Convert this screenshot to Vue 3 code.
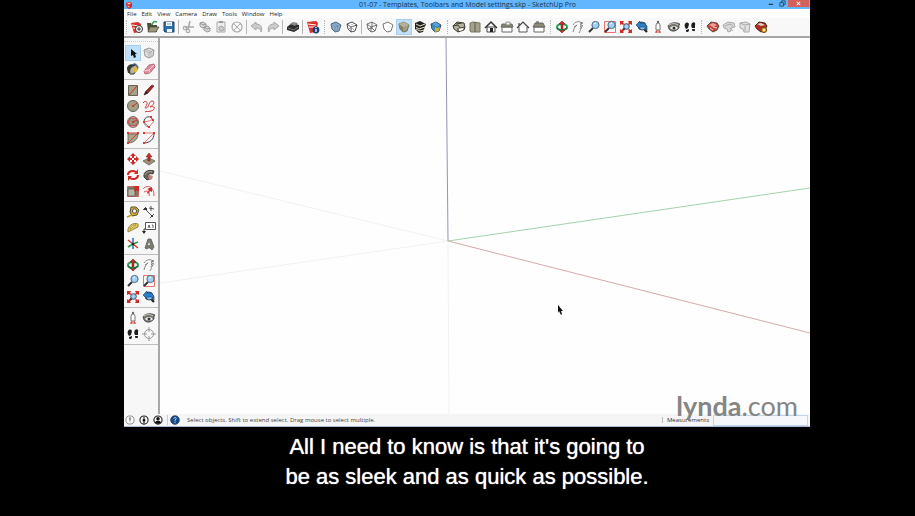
<template>
  <div class="player">
    <svg class="sprite" aria-hidden="true">
      <symbol id="i-logo" viewBox="0 0 16 16">
        <path d="M2 4l7-3 5 3v8l-6 4-5-4z" fill="#d42a23" />
        <path d="M4 5l5-2 3 2-4 2zM5 9l4 2v2l-4-2z" fill="#ffd9d2" />
      </symbol>
      <symbol id="i-new" viewBox="0 0 16 16">
        <path d="M2 4l7-1 3 2-1 8-6 1z" fill="#d9302a" />
        <path d="M3 6l7 1M4 9l6 1" stroke="#fff" />
        <circle cx="10" cy="10" r="3.5" fill="#fff" stroke="#333" />
        <path d="M10 8v4M8 10h4" stroke="#333" />
      </symbol>
      <symbol id="i-open" viewBox="0 0 16 16">
        <path d="M2 4h4l1 2h5v7H3z" fill="#4c4b3c" />
        <path d="M5 8h9l-3 5H3z" fill="#9a9879" stroke="#4c4b3c" stroke-width=".7" />
        <path d="M7 6c1-4 3-4 5-3" fill="none" stroke="#38a54a" stroke-width="1.5" />
      </symbol>
      <symbol id="i-save" viewBox="0 0 16 16">
        <path d="M3 3h10v10H4l-1-1z" fill="#2b6fae" stroke="#1d4065" />
        <path d="M5 3h6v4H5zM6 10h5v3H6z" fill="#f2f6fa" />
        <path d="M6 5h4" stroke="#9ab" />
      </symbol>
      <symbol id="i-cut" viewBox="0 0 16 16">
        <path d="M9 2L7 10M13 8H4" fill="none" stroke="#aaa" stroke-width="1.5" />
        <circle cx="4" cy="9" r="1.7" fill="none" stroke="#aaa" stroke-width="1.2" />
        <circle cx="7" cy="12" r="1.7" fill="none" stroke="#aaa" stroke-width="1.2" />
      </symbol>
      <symbol id="i-copy" viewBox="0 0 16 16">
        <path d="M3 4l3-1 3 2v3l-4 1-2-2zM7 8l4-1 2 2v3l-3 1-3-2z" fill="#d8d8d8" stroke="#999" />
        <path d="M3 4l3 2 3-1M7 8l3 2 3-1" fill="none" stroke="#999" />
      </symbol>
      <symbol id="i-paste" viewBox="0 0 16 16">
        <path d="M4 3h8v10H4z" fill="#eee" stroke="#aaa" />
        <path d="M6 2h4v2H6z" fill="#999" />
        <path d="M6 8l3-1 2 2v2l-3 1-2-1z" fill="#ccc" stroke="#999" stroke-width=".8" />
      </symbol>
      <symbol id="i-erase" viewBox="0 0 16 16">
        <circle cx="8" cy="8" r="5" fill="none" stroke="#aaa" stroke-width="1.2" />
        <path d="M5 5l6 6M11 5l-6 6" stroke="#aaa" />
      </symbol>
      <symbol id="i-undo" viewBox="0 0 16 16">
        <path d="M2 7l5-4v2c5 0 7 4 5 8 0-3-2-4-5-4v2z" fill="#ccc" stroke="#999" stroke-width=".8" />
      </symbol>
      <symbol id="i-redo" viewBox="0 0 16 16">
        <path d="M14 7L9 3v2c-5 0-7 4-5 8 0-3 2-4 5-4v2z" fill="#ccc" stroke="#999" stroke-width=".8" />
      </symbol>
      <symbol id="i-print" viewBox="0 0 16 16">
        <path d="M2 8l5-4 7 2v4l-5 3-7-2z" fill="#2c2c2c" />
        <path d="M5 5l3-2 5 1-3 3z" fill="#888" />
        <path d="M3 9l6 2 4-3" fill="none" stroke="#777" />
      </symbol>
      <symbol id="i-info" viewBox="0 0 16 16">
        <path d="M2 3l9-1 2 2-2 9-6 1z" fill="#d9302a" />
        <path d="M3 5l8 1M4 8h6" stroke="#fff" />
        <circle cx="11" cy="11" r="3.4" fill="#16407c" />
        <path d="M11 8v1M11 10v3" stroke="#fff" stroke-width="1.3" />
      </symbol>
      <symbol id="i-xray" viewBox="0 0 16 16">
        <path d="M3 5l5-2 5 3-2 6-4 1-3-3z" fill="#8fb0cd" stroke="#50677d" />
        <path d="M3 5l4 3 6-2M7 8v5M6 4l4 3-1 5" fill="none" stroke="#6c8cab" stroke-width=".8" />
      </symbol>
      <symbol id="i-back" viewBox="0 0 16 16">
        <path d="M3 5l5-2 5 3-2 6-4 1-3-3z" fill="#fff" stroke="#555" />
        <path d="M3 5l4 3 6-2M7 8v5" fill="none" stroke="#333" stroke-width=".8" />
        <path d="M8 3v6l3 3M8 9l-4 1" fill="none" stroke="#888" stroke-dasharray="1 1" />
      </symbol>
      <symbol id="i-wire" viewBox="0 0 16 16">
        <path d="M3 5l5-2 5 3-2 6-4 1-3-3zM3 5l4 3 6-2M7 8v5M8 3v6l3 3M8 9l-4 1" fill="none" stroke="#555" stroke-width=".8" />
      </symbol>
      <symbol id="i-hidden" viewBox="0 0 16 16">
        <path d="M3 5l5-2 5 3-2 6-4 1-3-3z" fill="#fff" stroke="#777" />
      </symbol>
      <symbol id="i-shaded" viewBox="0 0 16 16">
        <path d="M3 5l5-2 5 3-2 6-4 1-3-3z" fill="#a09d82" stroke="#77755f" />
        <path d="M3 5l4 3v5l-3-3z" fill="#84816a" />
        <path d="M3 5l5-2 5 3-6 2z" fill="#b5b298" />
      </symbol>
      <symbol id="i-texture" viewBox="0 0 16 16">
        <path d="M3 4l5-2 6 3-3 8-4 1-4-4z" fill="#222" />
        <path d="M4 5l4 2 5-2M4 8l3 2 6-2M4 10l4 2 4-1" fill="none" stroke="#e5e2c9" />
      </symbol>
      <symbol id="i-mono" viewBox="0 0 16 16">
        <path d="M3 5l5-2 5 3-2 6-4 1-3-3z" fill="#2f78b9" stroke="#375064" />
        <path d="M4 5l4-2 4 3-3 2z" fill="#5ba4d8" />
        <path d="M5 7l4 2 3-1-1 4-4 1-2-3z" fill="#c9af54" />
        <path d="M4 6l3 2v4l-3-2z" fill="#3d8fb4" />
      </symbol>
      <symbol id="i-iso" viewBox="0 0 16 16">
        <path d="M2 7l4-4 7 1 1 4-1 3-6 2-4-3z" fill="#b5b39d" stroke="#3c3c34" />
        <path d="M2 7l5-1 2 3 5-1M7 9v4M5 5l6-1" fill="none" stroke="#3c3c34" />
        <path d="M8 10l4-1v2l-4 1z" fill="#fff" />
      </symbol>
      <symbol id="i-top" viewBox="0 0 16 16">
        <path d="M3 4l3-1 7 1v9H4l-1-1z" fill="#a3a18b" stroke="#77755f" />
        <path d="M8 3v10" stroke="#5c5b4d" />
      </symbol>
      <symbol id="i-front" viewBox="0 0 16 16">
        <path d="M4 8h8v5H4z" fill="#fff" stroke="#444" />
        <path d="M2 9l6-6 6 6" fill="none" stroke="#333" stroke-width="1.5" />
        <path d="M7 9h3v4H7z" fill="#222" />
      </symbol>
      <symbol id="i-right" viewBox="0 0 16 16">
        <path d="M3 8h10v5H3z" fill="#fff" stroke="#666" />
        <path d="M3 5h10l1 3H2z" fill="#8d8b75" stroke="#555" stroke-width=".8" />
        <path d="M7 3h4v3H7z" fill="#eee" stroke="#777" stroke-width=".7" />
      </symbol>
      <symbol id="i-rear" viewBox="0 0 16 16">
        <path d="M4 8v5h8V8" fill="#fff" stroke="#555" />
        <path d="M2 9l6-6 6 6M4 7V4" fill="none" stroke="#444" stroke-width="1.2" />
      </symbol>
      <symbol id="i-left" viewBox="0 0 16 16">
        <path d="M3 8h10v5H3z" fill="#fff" stroke="#666" />
        <path d="M4 4h8l2 4H2z" fill="#8d8b75" stroke="#555" stroke-width=".8" />
        <path d="M5 3h3" stroke="#444" />
      </symbol>
      <symbol id="i-orbit" viewBox="0 0 16 16">
        <ellipse cx="8" cy="8" rx="5" ry="3" fill="#fff" stroke="#279a52" stroke-width="2" />
        <path d="M8 2l3 3H9v6h2l-3 3-3-3h2V5H5z" fill="#cf2a26" stroke="#641412" stroke-width=".5" />
        <path d="M3 9c2 3 8 2 10 0" fill="none" stroke="#1b7a3d" stroke-width="1.500" />
      </symbol>
      <symbol id="i-pan" viewBox="0 0 16 16">
        <path d="M3 6c2-3 5-4 7-3l3 1-3 1 3 2-3 0 2 2-2 0c1 2 0 3-1 5M3 13c1-3 1-5 4-7M7 6L4 8" fill="none" stroke="#777" stroke-width=".9" />
      </symbol>
      <symbol id="i-zoom" viewBox="0 0 16 16">
        <path d="M3 13l4-4" stroke="#333" stroke-width="2" />
        <circle cx="9.500" cy="6" r="3.600" fill="#a3d0f2" stroke="#4a6a8a" />
        <path d="M8 5l2-1" stroke="#e9f6ff" stroke-width="1.3" />
      </symbol>
      <symbol id="i-zoomwin" viewBox="0 0 16 16">
        <path d="M2.500 2.500h11v11h-11z" fill="none" stroke="#e8726c" />
        <path d="M3 13l4-4" stroke="#333" stroke-width="2" />
        <circle cx="9.500" cy="6" r="3.600" fill="#a3d0f2" stroke="#4a6a8a" />
        <path d="M8 5l2-1" stroke="#e9f6ff" stroke-width="1.3" />
      </symbol>
      <symbol id="i-extents" viewBox="0 0 16 16">
        <path d="M5 11l3-3" stroke="#222" stroke-width="2" />
        <circle cx="8.500" cy="7.500" r="2.800" fill="#a3d0f2" stroke="#37516b" />
        <path d="M2 2h4L5 4l2 1-2 1-1-1-2 1zM14 2v4l-2-1-1 1-1-1 1-1-1-2zM2 14v-4l1 1 2-1 1 1-1 2 1 1zM14 14h-4l1-2-1-1 1-1 2 1 1-1z" fill="#d32b25" />
      </symbol>
      <symbol id="i-previous" viewBox="0 0 16 16">
        <path d="M10 10l3 3" stroke="#222" stroke-width="2.200" />
        <circle cx="8" cy="7" r="4" fill="#8cc3ec" stroke="#30495f" />
        <path d="M2 6l4-4v2h4l3 3v4l-2-3-5 0v2z" fill="#2b7fc9" stroke="#173b61" stroke-width=".6" />
      </symbol>
      <symbol id="i-camera" viewBox="0 0 16 16">
        <path d="M6 6l1-2h2l1 2v5H6z" fill="#fff" stroke="#777" />
        <path d="M7 11l-1 3M9 11l1 3M5 13h6" fill="none" stroke="#d24a43" />
        <circle cx="8" cy="3" r="1.200" fill="#666" />
      </symbol>
      <symbol id="i-look" viewBox="0 0 16 16">
        <path d="M2 7c2-4 8-4 12-2l-1 1v3c-3 4-8 4-10 1z" fill="#77766c" stroke="#333" stroke-width=".7" />
        <path d="M4 9c3-3 6-2 8 0-2 2-6 2-8 0z" fill="#eee" />
        <circle cx="8" cy="9" r="1.500" fill="#333" />
        <path d="M3 6c3-2 6-2 9 0" fill="none" stroke="#ccc" />
      </symbol>
      <symbol id="i-walk" viewBox="0 0 16 16">
        <path d="M3 5c1-2 3-2 4 0l-1 4-2 1c-1-2-2-3-1-5zM4 11l3-1c0 3-1 3-2 3s-1-1-1-2zM10 4c2-2 4 0 3 2l0 3-3 0c-1-2-1-3 0-5zM10 10h3c0 3-1 2-2 2s-1-1-1-2z" fill="#1c1c1c" />
      </symbol>
      <symbol id="i-warehouse" viewBox="0 0 16 16">
        <path d="M2 7l4-4 6 1 2 3-2 4-4 2-4-3z" fill="#c8423c" stroke="#5c4a40" />
        <path d="M4 6l4-2 4 2-4 2z" fill="#eaa396" />
        <path d="M5 9l3 2M8 8l4 1" stroke="#e4d8c7" />
      </symbol>
      <symbol id="i-share" viewBox="0 0 16 16">
        <path d="M2 6l5-3 6 1 1 4-4 1v3l-3 1-1-3-3-1z" fill="#d8d8d8" stroke="#aaa" />
        <path d="M4 7l5-2 3 2M9 9l3 3" fill="none" stroke="#aaa" />
      </symbol>
      <symbol id="i-component" viewBox="0 0 16 16">
        <path d="M3 4l6-1 4 2-1 8-5 0-1-3-3-1z" fill="#e2e2e2" stroke="#aaa" />
        <path d="M3 4l5 2 5-1M8 7v5" fill="none" stroke="#aaa" />
      </symbol>
      <symbol id="i-extension" viewBox="0 0 16 16">
        <path d="M2 7l4-4 6 1 2 3-2 4-4 2-4-3z" fill="#b42b24" stroke="#41291f" />
        <path d="M4 5l4-1 4 2-4 1z" fill="#ddd3c5" />
        <circle cx="11" cy="11" r="2.600" fill="#e8aa2f" stroke="#765012" />
        <circle cx="11" cy="11" r="1" fill="#fff" />
      </symbol>
      <symbol id="i-select" viewBox="0 0 16 16">
        <path d="M6 4v7l2-1 1 3 2-1-1-3h2z" fill="#111" />
      </symbol>
      <symbol id="i-make" viewBox="0 0 16 16">
        <path d="M3 5l5-2 5 2-1 6-4 2-4-2z" fill="#ddd" stroke="#999" />
        <path d="M3 5l5 3 5-3M8 8v5M5 4l5 3v5" fill="none" stroke="#aaa" stroke-width=".8" />
      </symbol>
      <symbol id="i-paint" viewBox="0 0 16 16">
        <path d="M4 6l6-3 3 4-4 6H5z" fill="#b9b59a" stroke="#333" />
        <path d="M2 8c0-5 6-6 9-3-4 0-6 2-6 7l-2 0z" fill="#3b3a30" />
        <path d="M8 8l4-2 1 3-3 3z" fill="#e0bd30" />
        <path d="M7 4c3-3 6 0 6 3" fill="none" stroke="#3c78a8" />
      </symbol>
      <symbol id="i-eraser" viewBox="0 0 16 16">
        <path d="M3 10l5-6 5-1 1 3-5 6-5 1z" fill="#e2899a" stroke="#a85c6b" stroke-width=".8" />
        <path d="M3 10l5-1 5-5M8 9l1 3" fill="none" stroke="#f9ced7" />
      </symbol>
      <symbol id="i-rect" viewBox="0 0 16 16">
        <path d="M3.500 3.500h9v10h-9z" fill="#a4a189" stroke="#64624f" />
        <path d="M4 13l8-9" stroke="#ce2e28" />
      </symbol>
      <symbol id="i-pencil" viewBox="0 0 16 16">
        <path d="M3 13l2-4 6-6 2 1-6 7z" fill="#a82520" stroke="#5d2423" stroke-width=".7" />
        <path d="M3 13l2-4 2 2z" fill="#222" />
      </symbol>
      <symbol id="i-circle" viewBox="0 0 16 16">
        <circle cx="8" cy="8" r="5.500" fill="#a4a189" stroke="#64624f" />
        <path d="M8 8l4-3" stroke="#ce2e28" />
        <circle cx="8" cy="8" r="1" fill="#ce2e28" />
      </symbol>
      <symbol id="i-freehand" viewBox="0 0 16 16">
        <path d="M2 5c2-3 5-1 4 1-1 3-3 4-1 4 3 0 3-7 6-7 4 0 1 5-2 6 5-2 6 3 1 4-3 1-5 0-6 1" fill="none" stroke="#cb3932" />
      </symbol>
      <symbol id="i-polygon" viewBox="0 0 16 16">
        <circle cx="8" cy="8" r="5.500" fill="none" stroke="#55534a" stroke-width=".8" />
        <path d="M5 4h6l2 4-2 4H5L3 8z" fill="#9a977e" stroke="#c43730" />
        <circle cx="8" cy="8" r="1" fill="#ce2e28" />
        <path d="M8 8l4-2" stroke="#ce2e28" />
      </symbol>
      <symbol id="i-arc" viewBox="0 0 16 16">
        <path d="M3 8c0-6 7-7 9-2" fill="none" stroke="#444" />
        <path d="M12 6l1 1-5 6-5-5 5-1 4-2" fill="none" stroke="#e07a75" />
        <path d="M3 8c0 2 2 5 5 5" fill="none" stroke="#777" />
        <path d="M11 5h2v2h-2zM2 7h2v2H2zM7 12h2v2H7zM9 2h2v2H9z" fill="#cf3d37" />
      </symbol>
      <symbol id="i-arc2" viewBox="0 0 16 16">
        <path d="M3 4h10c0 5-4 9-10 9z" fill="#aaa78f" stroke="#5c5a48" stroke-width=".8" />
        <path d="M3 3h10M3 13l9-9" fill="none" stroke="#cf3d37" />
        <path d="M2 2h2v2H2zM12 2h2v2h-2zM2 12h2v2H2z" fill="#cf3d37" />
      </symbol>
      <symbol id="i-pie" viewBox="0 0 16 16">
        <path d="M13 4c0 5-4 9-10 9" fill="none" stroke="#444" />
        <path d="M3 3h10M3 13l9-9" fill="none" stroke="#e07a75" />
        <path d="M2 12h2v2H2zM12 2h2v2h-2zM2 2h2v2H2z" fill="#cf3d37" />
      </symbol>
      <symbol id="i-move" viewBox="0 0 16 16">
        <path d="M8 2l3 3H9v2H7V5H5zM8 14l3-3H9V9H7v2H5zM2 8l3-3v2h2v2H5v2zM14 8l-3-3v2H9v2h2v2z" fill="#cf2a26" />
        <path d="M7 7h2v2H7z" fill="#fff" />
      </symbol>
      <symbol id="i-push" viewBox="0 0 16 16">
        <path d="M2 10l6-3 6 3-6 4z" fill="#99967c" stroke="#77755f" />
        <path d="M8 2l3 4H9v4H7V6H5z" fill="#cf2a26" stroke="#721712" stroke-width=".5" />
      </symbol>
      <symbol id="i-rotate" viewBox="0 0 16 16">
        <path d="M3 8c0-4 5-5 8-3M13 8c0 4-5 5-8 3" fill="none" stroke="#cf2a26" stroke-width="2" />
        <path d="M13 2v5H9zM3 14V9h4z" fill="#cf2a26" />
      </symbol>
      <symbol id="i-follow" viewBox="0 0 16 16">
        <path d="M3 10c-1-5 4-8 10-6l-1 3c-3-1-5 0-5 3l2 2-3 1z" fill="#6a665c" stroke="#2c2b27" stroke-width=".8" />
        <path d="M4 8c1-3 4-4 7-3" fill="none" stroke="#a8a490" />
        <path d="M7 9c1-2 4-1 5 1l-2 3-2-1z" fill="#c3827a" />
      </symbol>
      <symbol id="i-scale" viewBox="0 0 16 16">
        <path d="M2.500 3.500h11v10h-11z" fill="#7c7a69" stroke="#c46863" />
        <path d="M3 6h7v7H3z" fill="#b7b49f" stroke="#555" stroke-width=".7" />
        <path d="M8 3h6v6l-2-2-2 2-1-2 1-2z" fill="#cf2a26" />
      </symbol>
      <symbol id="i-offset" viewBox="0 0 16 16">
        <path d="M2 6c3-4 11-4 11 7M3 9c4-2 6 0 5 4" fill="none" stroke="#d8514c" />
        <path d="M11 4l0 5-2-1-2 3-1-1 2-3-2-1z" fill="#cf2a26" />
      </symbol>
      <symbol id="i-tape" viewBox="0 0 16 16">
        <path d="M6 3h5l3 3-2 5-5 1-2-4z" fill="#d8b22c" stroke="#5c5333" />
        <circle cx="9.500" cy="7" r="2.200" fill="#f1edd6" stroke="#555" />
        <path d="M7 11l-5 2" stroke="#c69b1a" stroke-width="1.800" />
      </symbol>
      <symbol id="i-dim" viewBox="0 0 16 16">
        <path d="M4 5l7 7M2 6l3-3M9 14l4-4M8 4l5 1M10 2l0 5" fill="none" stroke="#555" />
        <path d="M3 4h3v2H3zM10 11h2v2h-2z" fill="#333" />
      </symbol>
      <symbol id="i-protractor" viewBox="0 0 16 16">
        <path d="M3 12C2 6 8 2 13 4v3z" fill="#e6cb49" stroke="#97853c" />
        <path d="M5 9c1-3 3-4 6-4z" fill="#fff" stroke="#97853c" stroke-width=".7" />
      </symbol>
      <symbol id="i-label" viewBox="0 0 16 16">
        <path d="M4.500 2.500h10v7h-10z" fill="#fff" stroke="#555" />
        <path d="M4 9H3v3" fill="none" stroke="#333" />
        <path d="M1 11h4l-2 3z" fill="#222" />
        <path d="M7 8l1-3 1 3M11 5h1v3" fill="none" stroke="#444" stroke-width=".8" />
      </symbol>
      <symbol id="i-axes" viewBox="0 0 16 16">
        <path d="M8 8V2M8 8v5" stroke="#2574bd" stroke-width="1.500" />
        <path d="M8 8l5-2M8 8l-5 3" stroke="#2e9b45" stroke-width="1.500" />
        <path d="M8 8l5 4M8 8L3 4" stroke="#d23b32" stroke-width="1.500" />
        <circle cx="8" cy="8" r="1.200" fill="#222" />
      </symbol>
      <symbol id="i-text3d" viewBox="0 0 16 16">
        <path d="M4 12L7 3h3l3 8-2 3-2-2H7l-1 1z" fill="#7c7b70" stroke="#5f5f5b" stroke-width=".8" />
        <path d="M8 6l1 3H7z" fill="#f5f5f5" />
      </symbol>
      <symbol id="i-target" viewBox="0 0 16 16">
        <circle cx="8" cy="8" r="4.500" fill="none" stroke="#999" />
        <path d="M8 1v5M8 10v5M1 8h5M10 8h5" stroke="#999" />
      </symbol>
      <symbol id="i-geo" viewBox="0 0 16 16">
        <circle cx="8" cy="8" r="6.500" fill="#fff" stroke="#888" stroke-width="1.500" />
        <path d="M8 12L6 6c0-3 4-3 4 0z" fill="#999" />
      </symbol>
      <symbol id="i-credit" viewBox="0 0 16 16">
        <circle cx="8" cy="8" r="6.500" fill="#fff" stroke="#222" stroke-width="1.800" />
        <path d="M6 6h4v4H9v3H7v-3H6zM7 3h2v2H7z" fill="#111" />
      </symbol>
      <symbol id="i-user" viewBox="0 0 16 16">
        <circle cx="8" cy="8" r="6.500" fill="#fff" stroke="#222" stroke-width="1.800" />
        <circle cx="8" cy="6" r="2.800" fill="#111" />
        <path d="M3 12c1-4 9-4 10 0l-3 2H6z" fill="#111" />
      </symbol>
      <symbol id="i-help" viewBox="0 0 16 16">
        <circle cx="8" cy="8" r="7" fill="#164a8b" stroke="#0d2e5a" />
        <path d="M6 6c0-3 5-2 4 0L8 8v2M8 11v2" fill="none" stroke="#cfe2f7" stroke-width="1.400" />
      </symbol>
    </svg>

    <div class="window">
      <header class="titlebar">
        <svg class="titlebar-logo"><use href="#i-logo" /></svg>
        <h1 class="titlebar-title">01-07 - Templates, Toolbars and Model settings.skp - SketchUp Pro</h1>
        <div class="titlebar-controls">
          <button class="control" aria-label="Minimize">
            <svg viewBox="0 0 8 8"><path d="M2 5h5" stroke="#23435c" stroke-width="1.500" /></svg>
          </button>
          <button class="control" aria-label="Restore">
            <svg viewBox="0 0 8 8"><path d="M1 3h4v4H1zM3 3V1h4v4H5" fill="none" stroke="#23435c" /></svg>
          </button>
          <button class="control control-close" aria-label="Close">
            <svg viewBox="0 0 8 8"><path d="M2 2l4 4M6 2L2 6" stroke="#fff" stroke-width="1.200" /></svg>
          </button>
        </div>
      </header>

      <nav class="menubar">
        <button v-for="menu in menus" :key="menu" class="menu">{{ menu }}</button>
      </nav>

      <div class="toolbar">
        <div
          v-for="(group, index) in toolbar"
          :key="index"
          class="toolbar-group"
          :class="{ grip: group.grip }"
        >
          <button
            v-for="tool in group.tools"
            :key="tool"
            class="tool"
            :class="{ active: tool === activeStyle }"
            :aria-label="tool"
          >
            <svg><use :href="'#i-' + tool" /></svg>
          </button>
        </div>
      </div>

      <div class="workspace">
        <aside class="palette">
          <div v-for="(group, index) in palette" :key="index" class="palette-group">
            <button
              v-for="tool in group"
              :key="tool"
              class="tool"
              :class="{ active: tool === activeTool }"
              :aria-label="tool"
              @click="activeTool = tool"
            >
              <svg><use :href="'#i-' + tool" /></svg>
            </button>
          </div>
        </aside>

        <main class="canvas">
          <svg class="axes" viewBox="0 0 650 376" preserveAspectRatio="none">
            <path d="M288 203L0 133M288 203L0 245M288 203L289 376" stroke="#f2f2f2" />
            <path d="M288 203L286 0" stroke="#9494b4" />
            <path d="M288 203L650 150" stroke="#a3d3ac" />
            <path d="M288 203L650 295" stroke="#d8a8a8" />
          </svg>
          <svg class="pointer" viewBox="0 0 6 10">
            <path d="M1 0v8l1-2 2 4 1-1-1-3h2z" fill="#111" />
          </svg>
          <div class="watermark"><b>lynda</b>.com</div>
        </main>
      </div>

      <footer class="statusbar">
        <div class="status-icons">
          <button v-for="icon in statusIcons" :key="icon" class="status-button" :aria-label="icon">
            <svg><use :href="'#i-' + icon" /></svg>
          </button>
        </div>
        <button class="status-button status-help" aria-label="help">
          <svg><use href="#i-help" /></svg>
        </button>
        <p class="status-text">Select objects. Shift to extend select. Drag mouse to select multiple.</p>
        <label class="measure-label" for="measurements">Measurements</label>
        <input id="measurements" v-model="measurement" class="measure-input" type="text" />
      </footer>
    </div>

    <p class="caption">All I need to know is that it's going to<br />be as sleek and as quick as possible.</p>
  </div>
</template>

<script setup>
import { ref } from 'vue'

const menus = ['File', 'Edit', 'View', 'Camera', 'Draw', 'Tools', 'Window', 'Help']

const activeStyle = ref('shaded')
const activeTool = ref('select')
const measurement = ref('')

const toolbar = [
  { tools: ['new', 'open', 'save'] },
  { tools: ['cut', 'copy', 'paste', 'erase'] },
  { tools: ['undo', 'redo'] },
  { tools: ['print'] },
  { tools: ['info'] },
  { grip: true, tools: ['xray', 'back'] },
  { tools: ['wire', 'hidden', 'shaded', 'texture', 'mono'] },
  { grip: true, tools: ['iso', 'top', 'front', 'right', 'rear', 'left'] },
  {
    grip: true,
    tools: ['orbit', 'pan', 'zoom', 'zoomwin', 'extents', 'previous', 'camera', 'look', 'walk']
  },
  { grip: true, tools: ['warehouse', 'share', 'component', 'extension'] }
]

const palette = [
  ['select', 'make', 'paint', 'eraser'],
  ['rect', 'pencil', 'circle', 'freehand', 'polygon', 'arc', 'arc2', 'pie'],
  ['move', 'push', 'rotate', 'follow', 'scale', 'offset'],
  ['tape', 'dim', 'protractor', 'label', 'axes', 'text3d'],
  ['orbit', 'pan', 'zoom', 'zoomwin', 'extents', 'previous'],
  ['camera', 'look', 'walk', 'target']
]

const statusIcons = ['geo', 'credit', 'user']
</script>

<style>
body {
  margin: 0;
  background: #000;
}
</style>

<style scoped>
.player {
  display: flex;
  flex-direction: column;
  box-sizing: border-box;
  min-height: 100vh;
  padding: 0 105px 0 124px;
  background: #000;
  font-family: 'Open Sans', 'Noto Sans', sans-serif;
}

.sprite {
  position: absolute;
  width: 0;
  height: 0;
}

button {
  padding: 0;
  border: none;
  background: none;
  font-family: inherit;
}

.window {
  flex: 1;
  display: flex;
  flex-direction: column;
  background: #f7f7f7;
}

.titlebar {
  display: flex;
  align-items: center;
  height: 9px;
  background: #62b6fd;
}

.titlebar-logo {
  width: 8px;
  height: 8px;
  margin-left: 1px;
}

.titlebar-title {
  flex: 1;
  margin: 0;
  padding-left: 38px;
  color: #16334b;
  font-size: 7px;
  font-weight: 400;
  line-height: 8px;
  text-align: center;
}

.titlebar-controls {
  display: flex;
  align-self: flex-start;
}

.control {
  display: flex;
  justify-content: center;
  width: 12px;
  height: 7px;
}

.control svg {
  width: 7px;
  height: 7px;
}

.control-close {
  width: 21px;
  margin-right: 1px;
  background: #d4605c;
}

.menubar {
  display: flex;
  gap: 5px;
  height: 9px;
  padding-left: 3px;
  background: #fdfdfd;
}

.menu {
  color: #222;
  font-size: 6px;
  line-height: 10px;
}

.toolbar {
  display: flex;
  height: 18px;
  padding-left: 1px;
  border-bottom: 2px solid #a5a5a5;
  background: #f8f8f8;
}

.toolbar-group {
  display: flex;
  align-items: center;
}

.toolbar-group::before {
  content: '';
  width: 1px;
  height: 14px;
  margin: 0 2px 0 1px;
  background: #b5b5b5;
}

.toolbar-group.grip::before,
.toolbar-group:first-child::before {
  width: 0;
  margin: 0 3px;
  border-left: 1px dotted #b5b5b5;
  background: none;
}

.toolbar-group:first-child::before {
  margin: 0 2px 0 1px;
}

.tool {
  width: 16px;
  height: 16px;
}

.tool svg {
  display: block;
  width: 16px;
  height: 16px;
}

.tool.active {
  background: #c0dff8;
  box-shadow: inset 0 0 0 1px #a6cff0;
}

.workspace {
  flex: 1;
  display: flex;
}

.palette {
  width: 34px;
  border-right: 2px solid #a8a8a8;
}

.palette-group {
  display: grid;
  grid-template-columns: 16px 16px;
  padding: 2px 0 2px 1px;
  border-bottom: 1px solid #bdbdbd;
}

.palette-group:first-child {
  margin-top: 3px;
  padding-top: 3px;
  border-top: 1px dotted #ccc;
}

.canvas {
  position: relative;
  flex: 1;
  background: #fefefe;
}

.axes {
  position: absolute;
  width: 100%;
  height: 100%;
}

.axes path {
  fill: none;
  vector-effect: non-scaling-stroke;
}

.pointer {
  position: absolute;
  top: 71%;
  left: 61%;
  width: 6px;
  height: 10px;
}

.statusbar {
  display: flex;
  align-items: center;
  height: 12px;
  border-bottom: 1px solid #a9b8d6;
  background: #f5f5f5;
}

.status-icons {
  display: flex;
  gap: 4px;
  margin-left: 1px;
  padding-right: 4px;
  border-right: 1px solid #ccc;
}

.status-button,
.status-button svg {
  display: block;
  width: 10px;
  height: 10px;
}

.status-help {
  margin-left: 2px;
}

.status-text {
  flex: 1;
  margin: 0 0 0 7px;
  color: #444;
  font-size: 6px;
  line-height: 10px;
}

.measure-label {
  padding-left: 4px;
  border-left: 1px solid #bbb;
  color: #333;
  font-size: 6px;
  line-height: 6px;
}

.measure-input {
  box-sizing: border-box;
  width: 95px;
  height: 11px;
  margin: 0 2px 0 4px;
  padding: 0 2px;
  border: 1px solid #c5d5e8;
  background: #f5f7fa;
  font-size: 6px;
}

.watermark {
  position: absolute;
  right: 12px;
  bottom: -4px;
  color: #858585;
  font-family: Lato, sans-serif;
  font-size: 27px;
  line-height: 24px;
}

.caption {
  margin: 0;
  padding: 5px 0 24px;
  color: #fff;
  font-family: 'Liberation Sans', Arial, sans-serif;
  font-size: 22px;
  line-height: 30px;
  text-align: center;
  text-shadow: 0 0 1px #fff;
}
</style>
